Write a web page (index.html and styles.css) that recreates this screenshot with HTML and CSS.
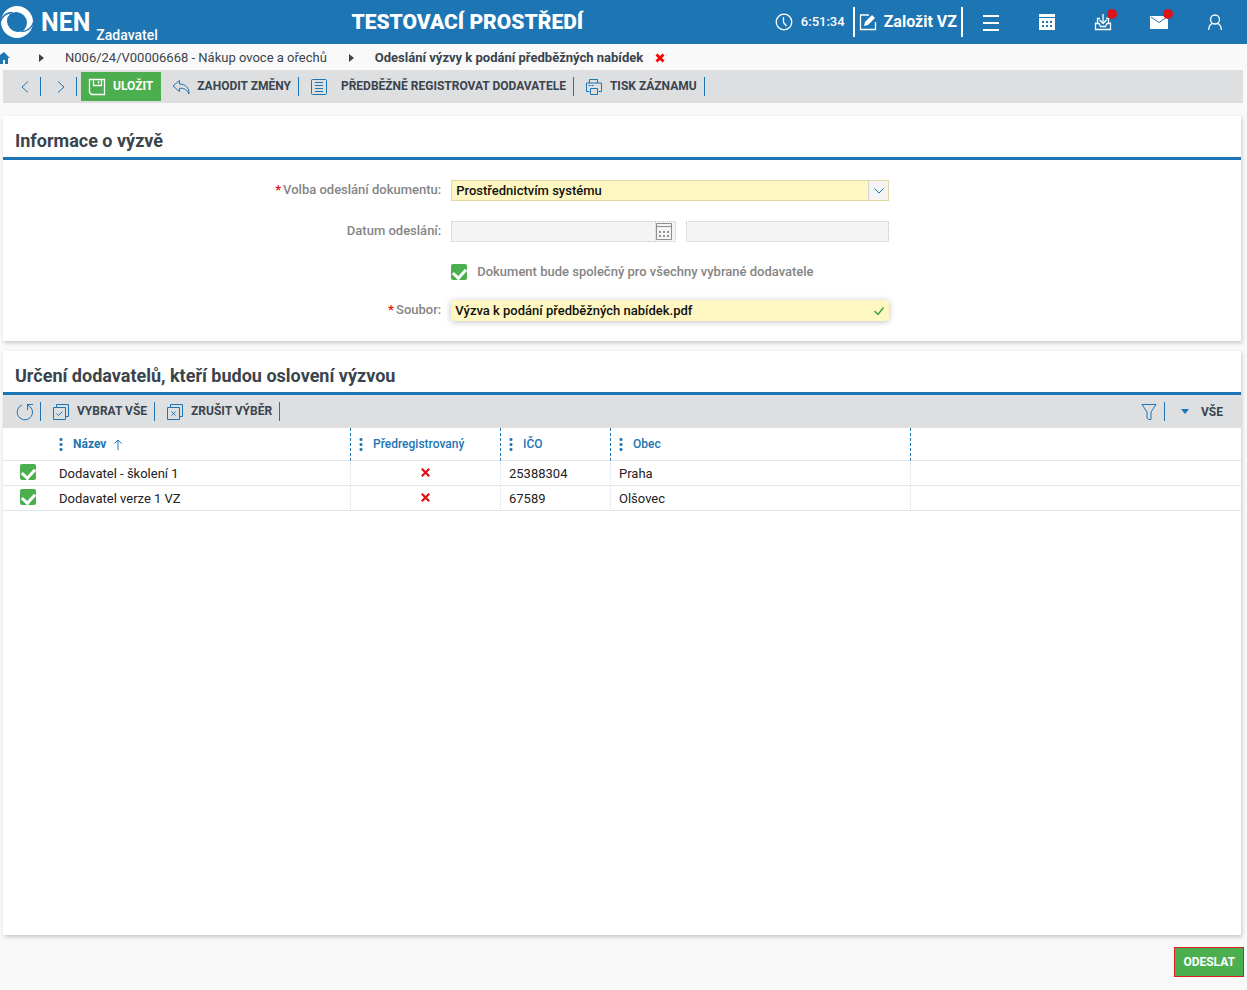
FILE: index.html
```html
<!DOCTYPE html>
<html lang="cs">
<head>
<meta charset="utf-8">
<title>NEN – Odeslání výzvy k podání předběžných nabídek</title>
<link rel="stylesheet" href="styles.css">
</head>
<body>
<header class="topbar">
  <a class="brand" href="#">
    <svg class="brand-mark" viewBox="0 0 34 34" aria-hidden="true"><circle cx="17" cy="17" r="16" fill="#fff"/><ellipse cx="17" cy="17" rx="10.500" ry="9.500" transform="rotate(45 17 17)" fill="#1d75b3"/><path d="M0 18C2 11 7 7.500 12.500 7.500M34 16C32 23 27 26.500 21.500 26.500" fill="none" stroke="#1d75b3" stroke-width="1.300"/></svg>
    <span class="brand-name">NEN</span>
    <span class="brand-role">Zadavatel</span>
  </a>
  <div class="env">TESTOVACÍ PROSTŘEDÍ</div>
  <div class="top-tools">
    <div class="clock">
      <svg viewBox="0 0 18 18" class="i18 line" aria-hidden="true"><circle cx="9" cy="9" r="7.800"/><path d="M8.500 4v5.500l3 3.500"/></svg>
      <span>6:51:34</span>
    </div>
    <button class="create" type="button">
      <svg viewBox="0 0 18 18" class="i18 line" aria-hidden="true"><path d="M10 2H1.500v14.500h15V9"/><path d="M5 13l1-4 7-7 3 3-7 7z" fill="#fff" stroke="none"/></svg>
      <span>Založit VZ</span>
    </button>
    <nav class="top-icons">
      <button type="button" aria-label="Menu"><svg viewBox="0 0 18 18" class="i18 line menu" aria-hidden="true"><path d="M1 3h16M1 10h16M1 17h16"/></svg></button>
      <button type="button" aria-label="Kalendář"><svg viewBox="0 0 18 18" class="i18" aria-hidden="true"><path fill="#fff" d="M1 1h16v3H1zM1 5h16v12H1z"/><path fill="#1d75b3" d="M4 8h2v2H4zM8 8h2v2H8zM12 8h2v2h-2zM4 12h2v2H4zM8 12h2v2H8zM12 12h2v2h-2z"/></svg></button>
      <button type="button" aria-label="Doručené"><svg viewBox="0 0 18 18" class="i18 line" aria-hidden="true"><path d="M6 5.500H3.500V10M12 5.500h2.500V10M1.500 9.500v7h15v-7M1.500 10.500H5l1.500 3h5l1.500-3h3.500M9 1v9M5.500 7L9 10.500 12.500 7"/></svg><i class="dot"></i></button>
      <button type="button" aria-label="Zprávy"><svg viewBox="0 0 18 18" class="i18" aria-hidden="true"><path fill="#fff" d="M0 3h18v13H0z"/><path d="M1 4l8 5.500L17 4" fill="none" stroke="#1d75b3"/></svg><i class="dot"></i></button>
      <button type="button" aria-label="Uživatel"><svg viewBox="0 0 18 18" class="i18 line" aria-hidden="true"><circle cx="9" cy="6.500" r="4.500"/><path d="M2.700 17c0-4 2-6 4-6.600M15.300 17c0-4-2-6-4-6.600"/></svg></button>
    </nav>
  </div>
</header>

<nav class="crumbs" aria-label="Drobečková navigace">
  <a class="home" href="#" aria-label="Domů"><svg viewBox="0 0 14 12" aria-hidden="true"><path fill="#1d75b3" d="M8 0l6 6h-2v6H9V8H7v4H4V6H0z" transform="translate(-4)"/></svg></a>
  <svg class="tri" viewBox="0 0 5 8" aria-hidden="true"><path d="M0 0l5 4-5 4z"/></svg>
  <a class="crumb" href="#">N006/24/V00006668 - Nákup ovoce a ořechů</a>
  <svg class="tri" viewBox="0 0 5 8" aria-hidden="true"><path d="M0 0l5 4-5 4z"/></svg>
  <span class="crumb current">Odeslání výzvy k podání předběžných nabídek</span>
  <button type="button" class="close" aria-label="Zavřít"><svg viewBox="0 0 10 10" aria-hidden="true"><path d="M1.500 1.500l7 7M8.500 1.500l-7 7" stroke="#f00" stroke-width="2.800"/></svg></button>
</nav>

<div class="toolbar main-tools">
  <button class="tool nav-arrow" type="button" aria-label="Předchozí"><svg viewBox="0 0 8 12" aria-hidden="true"><path d="M7 .5L1 6l6 5.500"/></svg></button>
  <button class="tool nav-arrow" type="button" aria-label="Další"><svg viewBox="0 0 8 12" aria-hidden="true"><path d="M1 .5L7 6l-6 5.500"/></svg></button>
  <button class="save" type="button"><svg viewBox="0 0 18 18" class="i18 line" aria-hidden="true"><path d="M1.500 1.500h15v15h-13l-2-2zM5.500 1.500v6h8v-6M10.500 3v2.500"/></svg><span>ULOŽIT</span></button>
  <button class="tool" type="button"><svg viewBox="0 0 18 18" class="i18" aria-hidden="true"><path d="M7.500 2.500L1 8l6.500 5.500v-3.200c4.500-.4 7.500 1.200 9.500 5.700.3-6-3-9.800-9.500-10z"/></svg><span>ZAHODIT ZMĚNY</span></button>
  <button class="tool wide" type="button"><svg viewBox="0 0 18 18" class="i18" aria-hidden="true"><rect x="1.500" y="1.500" width="15" height="15" rx="1"/><path d="M5 4.500h8M5 7.500h8M5 10.500h8M5 13.500h8"/></svg><span>PŘEDBĚŽNĚ REGISTROVAT DODAVATELE</span></button>
  <button class="tool" type="button"><svg viewBox="0 0 18 18" class="i18" aria-hidden="true"><path d="M4.500 5V1.500h8V5M4.500 13.500h-3V5h15v8.500h-3M5.500 10.500h7v6h-7zM3.500 7.500h2M6.500 7.500h2"/></svg><span>TISK ZÁZNAMU</span></button>
</div>

<main class="content">
  <section class="card">
    <h2>Informace o výzvě</h2>
    <form class="form">
      <label for="mode"><b>*</b>Volba odeslání dokumentu:</label>
      <div class="select">
        <select id="mode"><option>Prostřednictvím systému</option></select>
        <span class="select-arrow"><svg viewBox="0 0 10 6" aria-hidden="true"><path d="M.5.500L5 5 9.500.500"/></svg></span>
      </div>
      <label for="date">Datum odeslání:</label>
      <div class="dates">
        <div class="date">
          <input id="date" type="text" disabled>
          <button type="button" disabled aria-label="Vybrat datum"><svg viewBox="0 0 16 17" aria-hidden="true"><path d="M.5.500h15v16H.5zM.5 3.500h15" fill="none" stroke="#8f8f8f"/><path fill="#8f8f8f" d="M3 8h2v2H3zM7 8h2v2H7zM11 8h2v2h-2zM3 12h2v2H3zM7 12h2v2H7zM11 12h2v2h-2z"/></svg></button>
        </div>
        <input class="time" type="text" disabled aria-label="Čas odeslání">
      </div>
      <div class="check">
        <input class="tick" id="common" type="checkbox" checked>
        <label for="common">Dokument bude společný pro všechny vybrané dodavatele</label>
      </div>
      <label for="file"><b>*</b>Soubor:</label>
      <div class="file">
        <input id="file" type="text" value="Výzva k podání předběžných nabídek.pdf" readonly>
        <svg viewBox="0 0 10 8" aria-hidden="true"><path d="M.5 4L4 7.500 9.500.500"/></svg>
      </div>
    </form>
  </section>

  <section class="card grow">
    <h2>Určení dodavatelů, kteří budou oslovení výzvou</h2>
    <div class="toolbar">
      <button class="tool refresh" type="button" aria-label="Obnovit"><svg viewBox="0 0 18 18" class="i18" aria-hidden="true"><path d="M6 2A7.700 7.700 0 1 0 15 4.500M11 1.500h6M11.500 1.500v5.500M11.500 1.500L15 5"/></svg></button>
      <button class="tool" type="button"><svg viewBox="0 0 18 18" class="i18" aria-hidden="true"><path d="M1.500 4.500h12v12h-12zM4.500 4V1.500h12v12H14M4.500 10.500l2 2 4-4"/></svg><span>VYBRAT VŠE</span></button>
      <button class="tool" type="button"><svg viewBox="0 0 18 18" class="i18" aria-hidden="true"><path d="M1.500 4.500h12v12h-12zM4.500 4V1.500h12v12H14M5.500 8.500l4 4M9.500 8.500l-4 4"/></svg><span>ZRUŠIT VÝBĚR</span></button>
      <span class="spacer"></span>
      <button class="tool filter" type="button" aria-label="Filtr"><svg viewBox="0 0 18 18" class="i18" aria-hidden="true"><path d="M2 1.500h14L11 9v7.500H8.500L7 15V9z"/></svg></button>
      <button class="all" type="button"><svg viewBox="0 0 8 5" aria-hidden="true"><path d="M0 0h8L4 5z"/></svg>VŠE</button>
    </div>
    <table class="grid">
      <colgroup><col class="c-tick"><col class="c-name"><col class="c-pre"><col class="c-id"><col class="c-city"><col></colgroup>
      <thead>
        <tr>
          <th class="no-sep"></th>
          <th class="sorted"><div class="th"><i class="dots"></i>Název<svg class="sort" viewBox="0 0 8 11" aria-hidden="true"><path d="M4 11V1M.5 4.500L4 1l3.500 3.500"/></svg></div></th>
          <th><div class="th"><i class="dots"></i>Předregistrovaný</div></th>
          <th><div class="th"><i class="dots"></i>IČO</div></th>
          <th><div class="th"><i class="dots"></i>Obec</div></th>
          <th class="no-sep"></th>
        </tr>
      </thead>
      <tbody>
        <tr>
          <td class="pick no-sep"><input class="tick" type="checkbox" checked aria-label="Dodavatel - školení 1"></td>
          <td>Dodavatel - školení 1</td>
          <td class="no"><svg viewBox="0 0 8 8" role="img" aria-label="Ne"><path d="M.7.700l6.600 6.600M7.300.700L.7 7.300"/></svg></td>
          <td>25388304</td><td>Praha</td><td class="no-sep"></td>
        </tr>
        <tr>
          <td class="pick no-sep"><input class="tick" type="checkbox" checked aria-label="Dodavatel verze 1 VZ"></td>
          <td>Dodavatel verze 1 VZ</td>
          <td class="no"><svg viewBox="0 0 8 8" role="img" aria-label="Ne"><path d="M.7.700l6.600 6.600M7.300.700L.7 7.300"/></svg></td>
          <td>67589</td><td>Olšovec</td><td class="no-sep"></td>
        </tr>
      </tbody>
    </table>
  </section>
</main>

<footer class="actions"><button class="send" type="button">ODESLAT</button></footer>
</body>
</html>
```

FILE: styles.css
```css
* { box-sizing: border-box; }

body {
  margin: 0;
  min-height: 100vh;
  display: flex;
  flex-direction: column;
  background: #f9f9f9;
  color: #3a444d;
  font: 400 13px/20px Roboto, sans-serif;
}

button, input, select { font: inherit; color: inherit; margin: 0; }
button { display: flex; align-items: center; padding: 0; border: 0; background: none; cursor: pointer; }
a { color: inherit; text-decoration: none; }
svg { display: block; flex: none; }
.i18 { width: 18px; height: 18px; }
.line { fill: none; stroke: #fff; stroke-width: 1.300; }

/* Top bar */
.topbar {
  display: grid;
  grid-template-columns: minmax(0, 9fr) auto minmax(0, 17fr);
  align-items: center;
  height: 44px;
  background: #1d75b3;
  color: #fff;
}
.brand { display: flex; align-items: center; height: 44px; }
.brand-mark { width: 34px; height: 34px; }
.brand-name { padding: 2px 0 0 7px; font-size: 25px; font-weight: 700; }
.brand-role { align-self: flex-end; padding-left: 6px; font-size: 14px; line-height: 18px; font-weight: 500; }
.env { font-size: 21px; font-weight: 900; }
.top-tools { display: flex; align-items: center; justify-content: flex-end; }
.clock { display: flex; align-items: center; gap: 8px; padding-right: 8px; font-weight: 500; }
.create {
  gap: 7px;
  height: 30px;
  padding: 0 4px;
  border-left: 2px solid #fff;
  border-right: 2px solid #fff;
  font-size: 16px;
  font-weight: 700;
}
.menu { stroke-width: 2; }
.top-icons { display: flex; gap: 38px; padding: 0 23px 0 19px; }
.top-icons button { position: relative; }
.dot { position: absolute; top: -4px; right: -5px; width: 10px; height: 10px; border-radius: 50%; background: #dc1418; }

/* Breadcrumbs */
.crumbs { display: flex; align-items: center; height: 26px; padding-top: 1px; }
.home svg { width: 14px; height: 12px; }
.tri { width: 5px; height: 8px; margin: 0 21px 0 25px; fill: #3a444d; }
.crumb + .tri { margin-left: 22px; }
.current { font-weight: 700; }
.close { margin-left: 12px; }
.close svg { width: 10px; height: 10px; }

/* Toolbars */
.toolbar { display: flex; align-items: center; height: 33px; padding-left: 12px; background: #dedfe1; font-size: 12px; font-weight: 700; }
.toolbar span { padding-bottom: 2px; }
.main-tools { margin: 0 4px 13px 3px; }
.tool { gap: 7px; height: 19px; padding: 0 7px 0 11px; border-right: 1px solid #1d75b3; }
.tool svg { fill: none; stroke: #1d75b3; stroke-width: 1; }
.nav-arrow { width: 36px; padding-left: 16px; }
.nav-arrow svg { width: 8px; height: 12px; }
.nav-arrow:first-child, .refresh:first-child { width: 26px; padding: 0 0 0 1px; }
.nav-arrow:first-child svg { margin-left: 5px; }
.wide { gap: 13px; }
.save { gap: 7px; height: 29px; margin-left: 4px; padding: 0 8px 0 7px; background: #4bae4f; color: #fff; }
.spacer { flex: 1; }
.filter { padding-right: 6px; }
.all { gap: 12px; padding: 0 18px 0 16px; }
.all svg { width: 8px; height: 5px; fill: #1d75b3; }

/* Cards */
.content { flex: 1; display: flex; flex-direction: column; gap: 10px; padding: 0 6px 0 3px; }
.card { background: #fff; box-shadow: 1px 2px 4px rgba(0, 0, 0, .2); }
.grow { flex: 1; }
h2 { margin: 0; padding: 14px 12px 6px; border-bottom: 3px solid #1d75b3; font-size: 18px; line-height: 21px; font-weight: 700; }

/* Form */
.form {
  display: grid;
  grid-template-columns: 1fr 1fr;
  grid-template-rows: 21px 21px 18px 21px;
  gap: 20px 10px;
  padding: 20px 28.400% 20px 0;
}
.form label { color: #858585; font-weight: 500; text-align: right; }
.form label b { margin-right: 2px; color: #e01818; }
.form input[type="text"], select { min-width: 0; height: 21px; padding: 0 4px; border-radius: 0; }
.select { position: relative; }
select { width: 100%; appearance: none; border: 1px solid #e0d9a3; background: #fff7c2; color: #111; font-weight: 500; }
.select-arrow {
  position: absolute; top: 1px; right: 1px; bottom: 1px;
  width: 20px;
  display: grid; place-items: center;
  border-left: 1px solid #d5d5d5;
  background: #f4f4f4;
  pointer-events: none;
}
.select-arrow svg { width: 10px; height: 6px; fill: none; stroke: #1d75b3; }
.dates { display: grid; grid-template-columns: minmax(0, 11fr) minmax(0, 10fr); gap: 10px; }
.date { display: flex; }
.date input { flex: 1; border-right: 0 !important; }
.date button { width: 21px; padding-right: 2px; justify-content: center; border: 1px dotted #c8c8c8; background: #f4f4f4; }
.date svg { width: 16px; height: 17px; }
.dates input { border: 1px dotted #c8c8c8; background: #f4f4f4; }
.check { grid-column: 2; display: flex; align-items: flex-end; gap: 10px; white-space: nowrap; }
.check label { line-height: 16px; }
.tick {
  appearance: none;
  display: block;
  width: 16px; height: 16px;
  border-radius: 2px;
  background: #4bae4f;
}
.tick:checked::after {
  content: "";
  display: block;
  width: 6px; height: 10px;
  margin: 0 auto;
  border: solid #fff;
  border-width: 0 3px 3px 0;
  transform: translateY(2px) rotate(42deg);
}
.file { display: flex; align-items: center; padding-right: 5px; border-radius: 4px; background: #fff7c2; box-shadow: 0 1px 6px rgba(0, 0, 0, .25); }
.file input { flex: 1; border: 0; background: none; color: #111; font-weight: 500; outline: none; }
.file svg { width: 10px; height: 8px; fill: none; stroke: #2e9e33; stroke-width: 1.300; }

/* Supplier table */
.grid { width: 100%; table-layout: fixed; border-collapse: separate; border-spacing: 0; color: #222; }
.c-tick { width: 48px; }
.c-name { width: 300px; }
.c-pre { width: 150px; }
.c-id { width: 110px; }
.c-city { width: 300px; }
th, td { padding: 0 8px; border-bottom: 1px solid #dfe8ee; border-right: 1px dotted #d6dfe5; text-align: left; font-weight: 400; }
th { height: 33px; border-right: 1px dashed #1d75b3; color: #1d75b3; font-size: 12px; font-weight: 500; }
td { height: 25px; padding-top: 2px; line-height: 22px; }
th.no-sep, td.no-sep { border-right: 0; }
.th { display: flex; align-items: center; gap: 10px; }
.dots { width: 4px; height: 14px; background: radial-gradient(circle, #1d75b3 1px, transparent 2px) 0 0 / 4px 5px; }
.sorted { font-weight: 700; }
.sort { width: 8px; height: 11px; margin-left: -2px; fill: none; stroke: #1d75b3; }
td.pick, td.no { padding-top: 0; padding-bottom: 2px; }
.pick { padding: 0 17px; }
.no svg { width: 9px; height: 9px; margin: 0 auto; fill: none; stroke: #dc1418; stroke-width: 2; }

/* Footer */
.actions { display: flex; justify-content: flex-end; padding: 12px 3px 13px; }
.send { height: 30px; padding: 0 8px; border: 1px solid #e01b22; background: #4bae4f; color: #fff; font-size: 12px; font-weight: 700; }
```
